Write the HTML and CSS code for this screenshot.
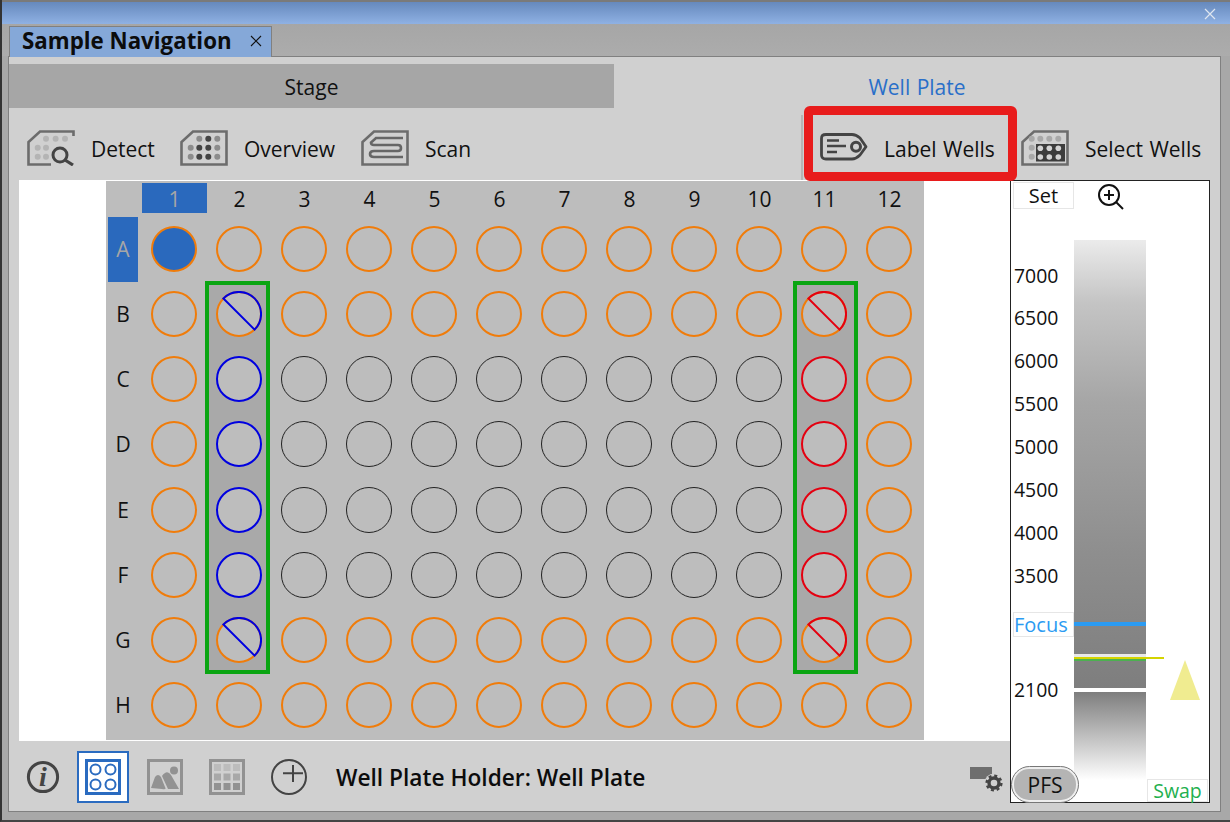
FILE: index.html
```html
<!DOCTYPE html>
<html lang="en">
<head>
  <meta charset="UTF-8">
  <title>Sample Navigation</title>
  <link rel="stylesheet" href="styles.css">
</head>
<body>

  <svg class="defs" width="0" height="0">
    <symbol id="half" viewBox="0 0 46 46">
      <circle cx="23" cy="23" r="22" fill="#bdbdbd" stroke="#f07c0a" stroke-width="2"/>
      <path d="M7.4 7.4A22 22 0 0 1 38.6 38.6Z" fill="none" stroke="currentColor" stroke-width="2"/>
    </symbol>
  </svg>

  <div class="titlebar">
    <svg class="win-close" width="12" height="12" viewBox="0 0 12 12"><path d="M1 1L11 11M11 1L1 11" stroke="#dfe6f0" stroke-width="1.2"/></svg>
  </div>

  <div class="tabstrip">
    <div class="tab">
      <span class="tab-name">Sample Navigation</span>
      <svg width="12" height="12" viewBox="0 0 12 12"><path d="M1 1L11 11M11 1L1 11" stroke="#111" stroke-width="1.1"/></svg>
    </div>
  </div>

  <div class="panel">
    <div class="seg">
      <div class="seg-item">Stage</div>
      <div class="seg-item active">Well Plate</div>
    </div>

    <div class="toolbar">
      <div class="tool">
        <svg class="tool-icon" viewBox="0 0 48 36">
          <path d="M24 34.5H1.5V12L13 1.5H46.5V6" fill="none" stroke="#6c6c6c" stroke-width="2.6"/>
          <g fill="#b4b4b4"><circle cx="19" cy="8.7" r="3"/><circle cx="28.6" cy="8.7" r="3"/><circle cx="38" cy="8.7" r="3"/><circle cx="10.7" cy="17.7" r="3"/><circle cx="19" cy="17.7" r="3"/><circle cx="10.7" cy="26.7" r="3"/><circle cx="19" cy="26.7" r="3"/></g>
          <circle cx="33" cy="25" r="7" fill="none" stroke="#444" stroke-width="3"/>
          <path d="M38 30L46 35" stroke="#444" stroke-width="3.2"/>
        </svg>
        <span>Detect</span>
      </div>
      <div class="tool">
        <svg class="tool-icon" viewBox="0 0 48 36">
          <path d="M1.5 34.5V12L13 1.5H46.5V34.5Z" fill="none" stroke="#6c6c6c" stroke-width="2.6"/>
          <g fill="#8c8c8c"><circle cx="19.3" cy="8.7" r="3"/><circle cx="37.3" cy="8.7" r="3"/><circle cx="10.7" cy="17.7" r="3"/><circle cx="37.3" cy="17.7" r="3"/><circle cx="10.7" cy="26.7" r="3"/><circle cx="37.3" cy="26.7" r="3"/></g>
          <g fill="#444"><circle cx="28.3" cy="8.7" r="3"/><circle cx="19.3" cy="17.7" r="3"/><circle cx="28.3" cy="17.7" r="3"/><circle cx="19.3" cy="26.7" r="3"/><circle cx="28.3" cy="26.7" r="3"/></g>
        </svg>
        <span>Overview</span>
      </div>
      <div class="tool">
        <svg class="tool-icon" viewBox="0 0 48 36">
          <path d="M1.5 34.5V12L13 1.5H46.5V34.5Z" fill="none" stroke="#6c6c6c" stroke-width="2.6"/>
          <path d="M42 8H15L10 12.5Q10 15 13 15H37Q40 15 40 18T37 21H13Q9 21 9 24T13 27H42" fill="none" stroke="#666" stroke-width="2.6"/>
        </svg>
        <span>Scan</span>
      </div>
      <div class="tool-divider"></div>
      <div class="tool highlighted">
        <svg class="tool-icon" viewBox="0 0 48 36">
          <path d="M6 4.5H32Q36 4.5 40 8L46 16.7L40 25Q36 29 32 29H6Q1.5 29 1.5 25V8.5Q1.5 4.5 6 4.5Z" fill="none" stroke="#444" stroke-width="2.8" stroke-linejoin="round"/>
          <path d="M7 10.5H19M7 16H26M7 22H17" stroke="#444" stroke-width="2.6"/>
          <circle cx="36" cy="16.7" r="4.5" fill="none" stroke="#444" stroke-width="3"/>
        </svg>
        <span>Label Wells</span>
      </div>
      <div class="tool">
        <svg class="tool-icon" viewBox="0 0 48 36">
          <path d="M1.5 34.5V12L13 1.5H46.5V34.5Z" fill="none" stroke="#6c6c6c" stroke-width="2.6"/>
          <g fill="#a8a8a8"><circle cx="10.7" cy="8.7" r="3"/><circle cx="19.3" cy="8.7" r="3"/><circle cx="28.3" cy="8.7" r="3"/><circle cx="37.3" cy="8.7" r="3"/><circle cx="10.7" cy="17.7" r="3"/><circle cx="10.7" cy="26.7" r="3"/></g>
          <rect x="15" y="14" width="29" height="17.5" fill="#3c3c3c"/>
          <g fill="#d4d4d4"><circle cx="19.3" cy="18.2" r="2.8"/><circle cx="28.3" cy="18.2" r="2.8"/><circle cx="37.3" cy="18.2" r="2.8"/><circle cx="19.3" cy="27" r="2.8"/><circle cx="28.3" cy="27" r="2.8"/><circle cx="37.3" cy="27" r="2.8"/></g>
        </svg>
        <span>Select Wells</span>
      </div>
    </div>

    <div class="main">
      <div class="left-col">
        <div class="plate-area">
          <div class="plate">
            <div class="sel sel-a"></div>
            <div class="sel sel-b"></div>

            <div></div>
            <div class="col-head on">1</div><div class="col-head">2</div><div class="col-head">3</div><div class="col-head">4</div><div class="col-head">5</div><div class="col-head">6</div><div class="col-head">7</div><div class="col-head">8</div><div class="col-head">9</div><div class="col-head">10</div><div class="col-head">11</div><div class="col-head">12</div>

            <div class="row-head on">A</div>
            <div class="cell"><i class="well filled"></i></div><div class="cell"><i class="well"></i></div><div class="cell"><i class="well"></i></div><div class="cell"><i class="well"></i></div><div class="cell"><i class="well"></i></div><div class="cell"><i class="well"></i></div><div class="cell"><i class="well"></i></div><div class="cell"><i class="well"></i></div><div class="cell"><i class="well"></i></div><div class="cell"><i class="well"></i></div><div class="cell"><i class="well"></i></div><div class="cell"><i class="well"></i></div>

            <div class="row-head">B</div>
            <div class="cell"><i class="well"></i></div><div class="cell"><svg class="half blue"><use href="#half"/></svg></div><div class="cell"><i class="well"></i></div><div class="cell"><i class="well"></i></div><div class="cell"><i class="well"></i></div><div class="cell"><i class="well"></i></div><div class="cell"><i class="well"></i></div><div class="cell"><i class="well"></i></div><div class="cell"><i class="well"></i></div><div class="cell"><i class="well"></i></div><div class="cell"><svg class="half red"><use href="#half"/></svg></div><div class="cell"><i class="well"></i></div>

            <div class="row-head">C</div>
            <div class="cell"><i class="well"></i></div><div class="cell"><i class="well blue"></i></div><div class="cell"><i class="well none"></i></div><div class="cell"><i class="well none"></i></div><div class="cell"><i class="well none"></i></div><div class="cell"><i class="well none"></i></div><div class="cell"><i class="well none"></i></div><div class="cell"><i class="well none"></i></div><div class="cell"><i class="well none"></i></div><div class="cell"><i class="well none"></i></div><div class="cell"><i class="well red"></i></div><div class="cell"><i class="well"></i></div>

            <div class="row-head">D</div>
            <div class="cell"><i class="well"></i></div><div class="cell"><i class="well blue"></i></div><div class="cell"><i class="well none"></i></div><div class="cell"><i class="well none"></i></div><div class="cell"><i class="well none"></i></div><div class="cell"><i class="well none"></i></div><div class="cell"><i class="well none"></i></div><div class="cell"><i class="well none"></i></div><div class="cell"><i class="well none"></i></div><div class="cell"><i class="well none"></i></div><div class="cell"><i class="well red"></i></div><div class="cell"><i class="well"></i></div>

            <div class="row-head">E</div>
            <div class="cell"><i class="well"></i></div><div class="cell"><i class="well blue"></i></div><div class="cell"><i class="well none"></i></div><div class="cell"><i class="well none"></i></div><div class="cell"><i class="well none"></i></div><div class="cell"><i class="well none"></i></div><div class="cell"><i class="well none"></i></div><div class="cell"><i class="well none"></i></div><div class="cell"><i class="well none"></i></div><div class="cell"><i class="well none"></i></div><div class="cell"><i class="well red"></i></div><div class="cell"><i class="well"></i></div>

            <div class="row-head">F</div>
            <div class="cell"><i class="well"></i></div><div class="cell"><i class="well blue"></i></div><div class="cell"><i class="well none"></i></div><div class="cell"><i class="well none"></i></div><div class="cell"><i class="well none"></i></div><div class="cell"><i class="well none"></i></div><div class="cell"><i class="well none"></i></div><div class="cell"><i class="well none"></i></div><div class="cell"><i class="well none"></i></div><div class="cell"><i class="well none"></i></div><div class="cell"><i class="well red"></i></div><div class="cell"><i class="well"></i></div>

            <div class="row-head">G</div>
            <div class="cell"><i class="well"></i></div><div class="cell"><svg class="half blue"><use href="#half"/></svg></div><div class="cell"><i class="well"></i></div><div class="cell"><i class="well"></i></div><div class="cell"><i class="well"></i></div><div class="cell"><i class="well"></i></div><div class="cell"><i class="well"></i></div><div class="cell"><i class="well"></i></div><div class="cell"><i class="well"></i></div><div class="cell"><i class="well"></i></div><div class="cell"><svg class="half red"><use href="#half"/></svg></div><div class="cell"><i class="well"></i></div>

            <div class="row-head">H</div>
            <div class="cell"><i class="well"></i></div><div class="cell"><i class="well"></i></div><div class="cell"><i class="well"></i></div><div class="cell"><i class="well"></i></div><div class="cell"><i class="well"></i></div><div class="cell"><i class="well"></i></div><div class="cell"><i class="well"></i></div><div class="cell"><i class="well"></i></div><div class="cell"><i class="well"></i></div><div class="cell"><i class="well"></i></div><div class="cell"><i class="well"></i></div><div class="cell"><i class="well"></i></div>
          </div>
        </div>

        <div class="bottom-bar">
          <svg class="b-info" width="34" height="34" viewBox="0 0 34 34">
            <circle cx="17" cy="17" r="14.6" fill="none" stroke="#444" stroke-width="3"/>
            <text x="17" y="26" text-anchor="middle" class="info-i">i</text>
          </svg>
          <div class="b-selected">
            <svg width="36" height="36" viewBox="0 0 36 36">
              <rect x="1.5" y="1.5" width="33" height="33" fill="none" stroke="#2a6bc0" stroke-width="3"/>
              <g fill="none" stroke="#2a6bc0" stroke-width="2"><circle cx="10.5" cy="10.5" r="5"/><circle cx="25.5" cy="10.5" r="5"/><circle cx="10.5" cy="25.5" r="5"/><circle cx="25.5" cy="25.5" r="5"/></g>
            </svg>
          </div>
          <svg class="b-pic" width="36" height="36" viewBox="0 0 36 36">
            <rect x="1.5" y="1.5" width="33" height="33" fill="none" stroke="#929292" stroke-width="3"/>
            <circle cx="27" cy="11.5" r="4" fill="#929292"/>
            <path d="M4 29L8 18Q11 14 14 18L18 28Q20 31 15 30ZM15 17Q20 10 24 16L32 30H21Z" fill="#929292"/>
          </svg>
          <svg class="b-grid" width="36" height="36" viewBox="0 0 36 36">
            <rect x="1.5" y="1.5" width="33" height="33" fill="none" stroke="#929292" stroke-width="3"/>
            <g fill="#bcbcbc"><rect x="5" y="5" width="7" height="7"/><rect x="14.5" y="5" width="7" height="7"/><rect x="24" y="5" width="7" height="7"/></g>
            <g fill="#a8a8a8"><rect x="5" y="14.5" width="7" height="7"/><rect x="14.5" y="14.5" width="7" height="7"/><rect x="24" y="14.5" width="7" height="7"/></g>
            <g fill="#929292"><rect x="5" y="24" width="7" height="7"/><rect x="14.5" y="24" width="7" height="7"/><rect x="24" y="24" width="7" height="7"/></g>
          </svg>
          <svg class="b-plus" width="36" height="36" viewBox="0 0 36 36">
            <circle cx="18" cy="18" r="17" fill="none" stroke="#444" stroke-width="2"/>
            <path d="M22 6V23M12 14.3H32" stroke="#444" stroke-width="2"/>
          </svg>
          <div class="holder">Well Plate Holder: Well Plate</div>
          <svg class="b-gear" width="34" height="26" viewBox="0 0 34 26">
            <rect x="0" y="0" width="22" height="12" fill="#6e6e6e"/>
            <circle cx="24" cy="16" r="9.5" fill="#d0d0d0"/>
            <circle cx="24" cy="16" r="5" fill="none" stroke="#444" stroke-width="3.4"/>
            <circle cx="24" cy="16" r="7.4" fill="none" stroke="#444" stroke-width="2.4" stroke-dasharray="3 2.81"/>
          </svg>
        </div>
      </div>

      <div class="focus">
        <div class="set-btn">Set</div>
        <svg class="zoom-icon" width="26" height="26" viewBox="0 0 26 26">
          <circle cx="11" cy="11" r="10" fill="none" stroke="#111" stroke-width="2"/>
          <path d="M11 6V16M6 11H16" stroke="#111" stroke-width="2"/>
          <path d="M18 18L25 25" stroke="#111" stroke-width="2"/>
        </svg>

        <div class="band">
          <div class="band-upper"></div>
          <div class="band-lower"></div>
          <div class="mark-focus"></div>
          <div class="mark-white"></div>
          <div class="mark-green"></div>
          <div class="mark-yellow"></div>
        </div>

        <div class="tick t7000">7000</div>
        <div class="tick t6500">6500</div>
        <div class="tick t6000">6000</div>
        <div class="tick t5500">5500</div>
        <div class="tick t5000">5000</div>
        <div class="tick t4500">4500</div>
        <div class="tick t4000">4000</div>
        <div class="tick t3500">3500</div>
        <div class="tick t2100">2100</div>

        <div class="focus-btn">Focus</div>
        <svg class="triangle" width="30" height="40" viewBox="0 0 30 40"><path d="M15 0L30 40H0Z" fill="#f0ec90"/></svg>
        <div class="pfs"><span>PFS</span></div>
        <div class="swap">Swap</div>
      </div>
    </div>
  </div>

</body>
</html>
```

FILE: styles.css
```css
* { box-sizing: border-box; }
body {
  margin: 0;
  width: 1230px;
  height: 822px;
  overflow: hidden;
  display: flex;
  flex-direction: column;
  background: #a8a8a8;
  border-left: 2px solid #333;
  border-bottom: 2px solid #444;
  font-family: "Open Sans", "Noto Sans", sans-serif;
  font-size: 21px;
  word-spacing: 1px;
  color: #111;
}
.defs { position: absolute; }

.titlebar {
  height: 24px;
  margin-left: -2px;
  flex: none;
  display: flex;
  align-items: center;
  justify-content: flex-end;
  padding: 2px 14px 0 0;
  border-top: 2px solid #7a7a7a;
  background: linear-gradient(#6689bd, #8fb1e3);
}

.tabstrip {
  height: 32px;
  flex: none;
  padding: 2px 0 0 7px;
  background: linear-gradient(#a6a6a6, #acacac);
}
.tab {
  width: 263px;
  height: 31px;
  display: flex;
  align-items: center;
  justify-content: space-between;
  padding: 0 9px 3px 12px;
  background: #85a8d8;
  border-top: 1px solid #808080;
  border-right: 1px solid #808080;
  border-left: 1px solid #808080;
  position: relative;
  z-index: 1;
}
.tab-name {
  padding-top: 2px;
  font-size: 22.3px;
  font-weight: 700;
  word-spacing: 0;
  color: #0c0c0c;
  line-height: 1;
}

.panel {
  flex: 1;
  width: 1213px;
  margin: 0 0 8px 6px;
  border: 1px solid #808080;
  background: #d0d0d0;
  display: flex;
  flex-direction: column;
  padding-top: 7px;
}

.seg {
  height: 44px;
  flex: none;
  display: flex;
}
.seg-item {
  width: 605px;
  padding-top: 1px;
  display: flex;
  align-items: center;
  justify-content: center;
  background: #a6a6a6;
}
.seg-item.active {
  flex: 1;
  background: none;
  color: #2a6fc9;
}

.toolbar {
  height: 72px;
  flex: none;
  padding: 8px 0 0 18px;
  display: grid;
  grid-template-columns: 153px 181px 440px 3px 217px auto;
  grid-template-rows: 64px;
  align-items: center;
}
.tool {
  display: flex;
  align-items: center;
  gap: 16px;
  white-space: nowrap;
}
.tool span { padding-top: 2px; }
.tool-icon {
  width: 48px;
  height: 36px;
  flex: none;
}
.tool-divider {
  width: 2px;
  height: 65px;
  align-self: end;
  background: #b6b6b6;
}
.tool.highlighted {
  align-self: start;
  width: 213px;
  height: 75px;
  margin-top: -10px;
  padding: 9px 0 0 7px;
  border: 9px solid #e81c1c;
  border-radius: 6px;
  position: relative;
  z-index: 1;
}

.main {
  flex: 1;
  display: flex;
}
.left-col {
  width: 1001px;
  flex: none;
  padding-left: 10px;
  display: flex;
  flex-direction: column;
}
.plate-area {
  height: 561px;
  flex: none;
  padding: 1px 0 1px 87px;
  background: #fff;
}

.plate {
  position: relative;
  isolation: isolate;
  width: 818px;
  height: 559px;
  background: #bdbdbd;
  display: grid;
  grid-template-columns: 36px repeat(12, 65px);
  grid-template-rows: 35.5px repeat(8, 65.15px);
}
.sel {
  position: absolute;
  z-index: -1;
  top: 100px;
  width: 65px;
  height: 393px;
  background: #a9a9a9;
  border: 4px solid #0aa512;
}
.sel-a { left: 99px; }
.sel-b { left: 687px; }

.col-head {
  height: 30px;
  margin-top: 2px;
  padding-top: 1px;
  display: flex;
  align-items: center;
  justify-content: center;
}
.row-head {
  width: 30px;
  margin-left: 2px;
  display: flex;
  align-items: center;
  justify-content: center;
}
.col-head.on, .row-head.on {
  background: #2a69bd;
  color: #a6a6a6;
}

.cell {
  display: flex;
  align-items: center;
  justify-content: center;
  padding-right: 1px;
}
.well {
  display: block;
  width: 46px;
  height: 46px;
  background: #bdbdbd;
  border: 2px solid #f07c0a;
  border-radius: 50%;
}
.well.none { border: 1px solid #222; }
.well.blue { border-color: #0000e0; }
.well.red { border-color: #e40010; }
.well.filled { background: #2a69bd; }
.half {
  width: 46px;
  height: 46px;
}
.half.blue { color: #0000e0; }
.half.red { color: #e40010; }

.bottom-bar {
  flex: 1;
  display: flex;
  align-items: center;
  padding: 2px 0 0 7px;
}
.info-i {
  font-family: "Liberation Serif", serif;
  font-style: italic;
  font-weight: 700;
  font-size: 28px;
  fill: #444;
}
.b-selected {
  width: 52px;
  height: 52px;
  margin-left: 17px;
  display: flex;
  align-items: center;
  justify-content: center;
  background: #fff;
  border: 2px solid #2a6bc0;
}
.b-pic { margin-left: 18px; }
.b-grid { margin-left: 26px; }
.b-plus { margin-left: 26px; }
.holder {
  margin-left: 29px;
  font-weight: 600;
  font-size: 22.7px;
  word-spacing: 0;
  color: #0c0c0c;
  white-space: nowrap;
}
.b-gear {
  margin-left: auto;
  margin-right: 6px;
  margin-top: 5px;
}

.focus {
  position: relative;
  width: 200px;
  height: 623px;
  background: #fff;
  border: 1px solid #222;
  flex: none;
}
.set-btn {
  position: absolute;
  left: 2px;
  top: 1px;
  width: 61px;
  height: 27px;
  display: flex;
  align-items: center;
  justify-content: center;
  background: #fff;
  border: 1px solid #e6e6e6;
  font-size: 20px;
}
.zoom-icon {
  position: absolute;
  left: 87px;
  top: 3px;
}

.band {
  position: absolute;
  left: 63px;
  top: 59px;
  width: 72px;
  height: 540px;
}
.band-upper {
  height: 448px;
  background: linear-gradient(#ebebeb, #c4c4c4 14%, #a6a6a6 36%, #8e8e8e 70%, #7e7e7e);
}
.band-lower {
  height: 88px;
  margin-top: 4px;
  background: linear-gradient(#7e7e7e, #fff);
}
.mark-focus, .mark-white, .mark-green, .mark-yellow {
  position: absolute;
  left: 0;
  width: 72px;
}
.mark-focus { top: 382px; height: 4px; background: #2b9bf2; }
.mark-white { top: 414px; height: 3px; background: #e8e8e8; }
.mark-green { top: 419px; height: 2px; background: #4cb050; }
.mark-yellow { top: 417px; height: 2px; width: 90px; background: #d4d400; }

.tick {
  position: absolute;
  left: 3px;
  line-height: 24px;
  font-size: 19.4px;
}
.t7000 { top: 83px; }
.t6500 { top: 125px; }
.t6000 { top: 168px; }
.t5500 { top: 211px; }
.t5000 { top: 254px; }
.t4500 { top: 297px; }
.t4000 { top: 340px; }
.t3500 { top: 383px; }
.t2100 { top: 497px; }

.focus-btn {
  position: absolute;
  left: 2px;
  top: 431px;
  width: 61px;
  height: 25px;
  display: flex;
  align-items: center;
  padding-left: 0;
  background: #fff;
  border: 1px solid #e6e6e6;
  color: #2b9bf2;
  font-size: 20px;
}
.triangle {
  position: absolute;
  left: 159px;
  top: 479px;
}
.pfs {
  position: absolute;
  left: 0;
  bottom: -1px;
  width: 68px;
  height: 37px;
  padding: 2px;
  border: 1px solid #777;
  border-radius: 19px;
  background: #eee;
}
.pfs span {
  display: flex;
  height: 100%;
  align-items: center;
  justify-content: center;
  border-radius: 15px;
  background: #b4b4b4;
  font-size: 21px;
}
.swap {
  position: absolute;
  right: 1px;
  bottom: 0;
  width: 61px;
  height: 23px;
  display: flex;
  align-items: center;
  justify-content: center;
  background: #fff;
  border: 1px solid #e6e6e6;
  color: #1fb04f;
  font-size: 19.5px;
}
```
